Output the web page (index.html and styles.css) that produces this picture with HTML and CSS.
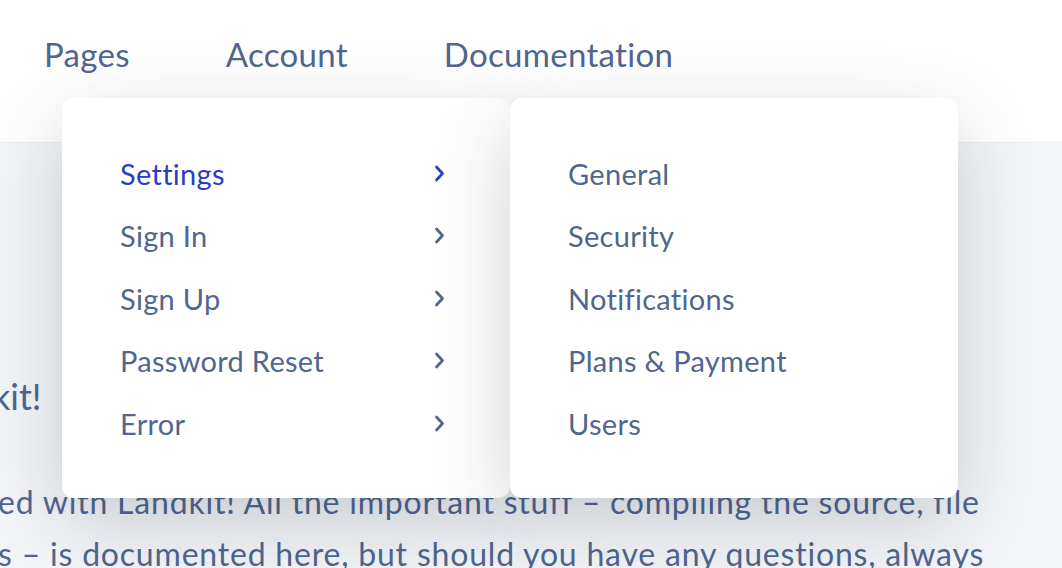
FILE: index.html
```html
<!DOCTYPE html>
<html lang="en">
<head>
<meta charset="utf-8">
<title>Landkit</title>
<link rel="stylesheet" href="styles.css">
</head>
<body>
<header class="navbar">
  <nav class="nav">
    <a class="nav-link">Pages</a>
    <a class="nav-link">Account</a>
    <a class="nav-link">Documentation</a>
  </nav>
</header>
<main class="content">
  <h1 class="title">kit!</h1>
  <p class="lead">ed with Landkit! All the important stuff – compiling the source, file<br>s – is documented here, but should you have any questions, always</p>
</main>
<div class="dropdown">
  <ul class="card card-main">
    <li class="item active"><span>Settings</span><svg class="chev" viewBox="0 0 11 17"><path d="M2.5 2l6 6.5-6 6.5"/></svg></li>
    <li class="item"><span>Sign In</span><svg class="chev" viewBox="0 0 11 17"><path d="M2.5 2l6 6.5-6 6.5"/></svg></li>
    <li class="item"><span>Sign Up</span><svg class="chev" viewBox="0 0 11 17"><path d="M2.5 2l6 6.5-6 6.5"/></svg></li>
    <li class="item"><span>Password Reset</span><svg class="chev" viewBox="0 0 11 17"><path d="M2.5 2l6 6.5-6 6.5"/></svg></li>
    <li class="item"><span>Error</span><svg class="chev" viewBox="0 0 11 17"><path d="M2.5 2l6 6.5-6 6.5"/></svg></li>
  </ul>
  <ul class="card card-sub">
    <li class="item">General</li>
    <li class="item">Security</li>
    <li class="item">Notifications</li>
    <li class="item">Plans &amp; Payment</li>
    <li class="item">Users</li>
  </ul>
</div>
</body>
</html>
```
FILE: styles.css
```css
html, body {
  margin: 0;
  padding: 0;
}
body {
  width: 1062px;
  height: 568px;
  overflow: hidden;
  position: relative;
  background: #f3f5f8;
  font-family: "Lato", "Liberation Sans", sans-serif;
  color: #506690;
}
.navbar {
  height: 142px;
  background: #ffffff;
  border-bottom: 1px solid #e9ecf2;
}
.nav {
  display: flex;
  padding: 32px 0 0 44px;
  gap: 96px;
}
.nav-link {
  font-size: 33px;
  line-height: 44px;
  letter-spacing: 0.3px;
  color: #506690;
}
.content {
  margin-left: -8px;
}
.title {
  margin: 231px 0 0 0;
  font-size: 36px;
  line-height: 44px;
  font-weight: 400;
}
.lead {
  margin: 58px 0 0 6px;
  font-size: 32px;
  line-height: 52px;
  letter-spacing: 0.8px;
  white-space: nowrap;
}
.dropdown {
  position: absolute;
  top: 98px;
  left: 62px;
  display: flex;
}
.card {
  list-style: none;
  margin: 0;
  background: #ffffff;
  border-radius: 12px;
  width: 448px;
  height: 400px;
  box-sizing: border-box;
  padding: 44px 58px 0 58px;
  box-shadow: 0 24px 80px rgba(22, 28, 45, 0.2);
}
.item {
  display: flex;
  align-items: center;
  justify-content: space-between;
  height: 62.5px;
  font-size: 29px;
  letter-spacing: 0.3px;
  color: #506690;
}
.item.active {
  color: #2a3dc5;
}
.chev {
  width: 11px;
  height: 17px;
  margin-right: 7px;
  fill: none;
  stroke: currentColor;
  stroke-width: 2.7;
  stroke-linecap: round;
  stroke-linejoin: round;
}
```
